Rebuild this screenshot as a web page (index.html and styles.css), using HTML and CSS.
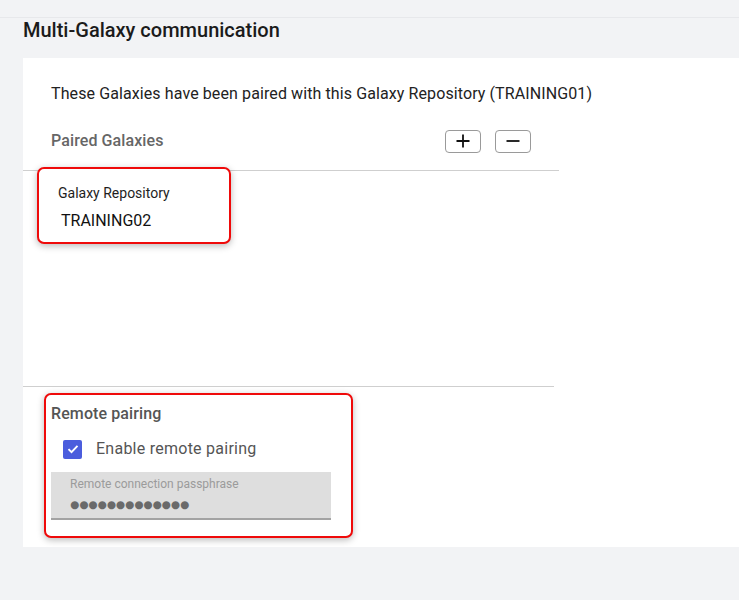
FILE: index.html
```html
<!DOCTYPE html>
<html lang="en">
<head>
<meta charset="utf-8">
<title>Multi-Galaxy communication</title>
<link rel="stylesheet" href="styles.css">
</head>
<body>
<div class="topbar"></div>
<h1 class="page-title">Multi-Galaxy communication</h1>
<main class="panel">
  <p class="intro">These Galaxies have been paired with this Galaxy Repository (TRAINING01)</p>
  <section class="paired">
    <div class="paired-head">
      <h2 class="section-title">Paired Galaxies</h2>
      <div class="actions">
        <button class="icon-btn" type="button" aria-label="Add">
          <svg width="14" height="14" viewBox="0 0 14 14"><path d="M7 0.5v13M0.5 7h13" stroke="#111" stroke-width="1.8" fill="none"/></svg>
        </button>
        <button class="icon-btn" type="button" aria-label="Remove">
          <svg width="14" height="14" viewBox="0 0 14 14"><path d="M0.5 7h13" stroke="#111" stroke-width="1.8" fill="none"/></svg>
        </button>
      </div>
    </div>
    <div class="paired-list">
      <div class="highlight galaxy-card">
        <div class="card-label">Galaxy Repository</div>
        <div class="card-value">TRAINING02</div>
      </div>
    </div>
  </section>
  <section class="remote">
    <div class="highlight remote-box">
      <h2 class="section-title remote-title">Remote pairing</h2>
      <label class="check-row">
        <span class="checkbox">
          <svg width="12" height="10" viewBox="0 0 12 10"><path d="M1.5 5.2l3 3 6-6.4" stroke="#fff" stroke-width="1.9" fill="none"/></svg>
        </span>
        <span class="check-label">Enable remote pairing</span>
      </label>
      <div class="field">
        <div class="field-label">Remote connection passphrase</div>
        <div class="field-value">●●●●●●●●●●●●●</div>
      </div>
    </div>
  </section>
</main>
</body>
</html>
```
FILE: styles.css
```css
* { box-sizing: border-box; }

body {
  margin: 0;
  background: #f2f3f5;
  font-family: Roboto, "Liberation Sans", sans-serif;
  color: #222;
}

.topbar {
  height: 18px;
  border-bottom: 1px solid #e7e8eb;
}

.page-title {
  margin: 0 0 16px 23px;
  font-size: 20px;
  line-height: 24px;
  font-weight: 500;
  color: #1b1b1b;
}

.panel {
  margin-left: 23px;
  height: 489px;
  background: #fff;
  padding-top: 26px;
}

.intro {
  margin: 0 0 0 28px;
  font-size: 16px;
  line-height: 20px;
  letter-spacing: 0.1px;
  color: #222;
}

.paired {
  width: 536px;
  margin-top: 25px;
}

.paired-head {
  display: flex;
  align-items: center;
  justify-content: space-between;
  padding: 0 28px;
  height: 24px;
}

.section-title {
  margin: 0;
  font-size: 16px;
  line-height: 20px;
  font-weight: 500;
  letter-spacing: 0.1px;
  color: #666;
}

.actions {
  display: flex;
  gap: 14px;
}

.icon-btn {
  width: 36px;
  height: 23px;
  padding: 0;
  display: flex;
  align-items: center;
  justify-content: center;
  background: #fff;
  border: 1px solid #9a9a9a;
  border-radius: 4px;
}

.paired-list {
  margin-top: 17px;
  border-top: 1px solid #cfcfcf;
  height: 216px;
  padding-left: 14px;
}

.highlight {
  position: relative;
  background: #fff;
  border: 2px solid #ef0a0a;
  border-radius: 7px;
  box-shadow: 0 2px 7px rgba(0, 0, 0, 0.28);
}

.galaxy-card {
  width: 194px;
  height: 77px;
  margin-top: -4px;
  padding: 15px 0 0 19px;
}

.card-label {
  font-size: 14px;
  line-height: 18px;
  color: #1e1e1e;
}

.card-value {
  margin: 9px 0 0 3px;
  font-size: 16px;
  line-height: 20px;
  color: #111;
}

.remote {
  width: 531px;
  border-top: 1px solid #cfcfcf;
  padding: 6px 0 0 21px;
}

.remote-box {
  width: 309px;
  height: 145px;
  padding: 9px 0 0 5px;
}

.remote-title {
  color: #555;
}

.check-row {
  display: flex;
  align-items: center;
  height: 24px;
  margin-top: 13px;
  padding-left: 12px;
}

.checkbox {
  width: 19px;
  height: 19px;
  border-radius: 2px;
  background: #4b5ddd;
  display: flex;
  align-items: center;
  justify-content: center;
}

.check-label {
  margin-left: 14px;
  font-size: 16px;
  line-height: 20px;
  letter-spacing: 0.25px;
  color: #555;
}

.field {
  margin-top: 11px;
  width: 280px;
  height: 48px;
  background: #dedede;
  border-bottom: 2px solid #a3a3a3;
  padding: 5px 0 0 19px;
}

.field-label {
  font-size: 12px;
  line-height: 14px;
  color: #9b9b9b;
}

.field-value {
  margin-top: 5px;
  font-family: "DejaVu Sans", sans-serif;
  font-size: 10.5px;
  line-height: 16px;
  color: #6a6a6a;
}
```
